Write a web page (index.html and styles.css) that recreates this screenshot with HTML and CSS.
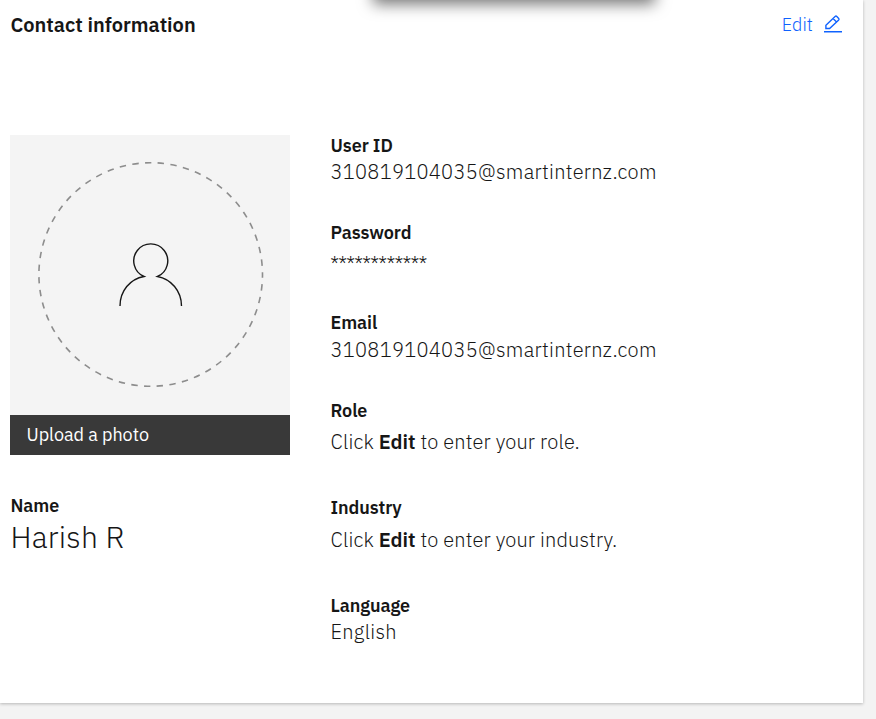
FILE: index.html
```html
<!DOCTYPE html>
<html lang="en">
<head>
<meta charset="utf-8">
<title>Contact information</title>
<link rel="stylesheet" href="styles.css">
</head>
<body>
<main class="card">
  <div class="popover-shadow"></div>
  <header class="card-header">
    <h1 class="title">Contact information</h1>
    <a class="edit"><span class="edit-text">Edit</span>
      <svg class="pencil" viewBox="0 0 20 20" fill="none" stroke="currentColor"><path d="M1 17.750H19" stroke-width="1.500"/><path stroke-width="1.400" d="M2.900 14.500V11.300L12.100 2.500Q13 1.700 13.800 2.500L15.700 4.400Q16.400 5.100 15.700 5.900L6.600 14.500ZM10 4.600L13.600 8"/></svg>
    </a>
  </header>
  <div class="columns">
    <section class="profile">
      <div class="photo">
        <svg class="avatar" viewBox="0 0 280 280" fill="none"><circle cx="140.700" cy="139.500" r="111.800" stroke="#8d8d8d" stroke-width="1.600" stroke-dasharray="6.400 6.370" stroke-dashoffset="3"/><path d="M110 171C110 156 120 144 134 141.500A17 17 0 1 1 147.500 141.500C161 144 171.500 156 171.500 171" stroke="#161616" stroke-width="1.400"/></svg>
      </div>
      <div class="upload">Upload a photo</div>
      <div class="label name-label">Name</div>
      <div class="name">Harish R</div>
    </section>
    <section class="details">
      <div class="field user-id"><div class="label">User ID</div><div class="value address">310819104035@smartinternz.com</div></div>
      <div class="field password"><div class="label">Password</div><div class="value stars">************</div></div>
      <div class="field email"><div class="label">Email</div><div class="value address">310819104035@smartinternz.com</div></div>
      <div class="field role"><div class="label">Role</div><div class="value">Click <b>Edit</b> to enter your role.</div></div>
      <div class="field industry"><div class="label">Industry</div><div class="value">Click <b>Edit</b> to enter your industry.</div></div>
      <div class="field language"><div class="label">Language</div><div class="value english">English</div></div>
    </section>
  </div>
</main>
</body>
</html>
```
FILE: styles.css
```css
* { box-sizing: border-box; }
body { margin: 0; height: 719px; overflow: hidden; background: #f3f3f3; color: #161616; font-family: "IBM Plex Sans", Roboto, sans-serif; }
.card { position: relative; width: 863px; height: 703px; background: #fff; box-shadow: 0 1px 3px rgba(0, 0, 0, .25); }
.popover-shadow { position: absolute; left: 374px; top: -20px; width: 280px; height: 20px; box-shadow: 0 3px 15px 1px rgba(0, 0, 0, .55); }
.card-header { display: flex; justify-content: space-between; height: 134px; padding: 11px 20px 0 10.5px; }
.title { margin: 0; font-size: 20px; line-height: 28px; font-weight: 600; }
.edit { display: flex; height: 28px; color: #0f62fe; font-size: 18px; line-height: 28px; font-weight: 300; letter-spacing: .1px; }
.pencil { width: 20px; height: 20px; margin: 3px 0 0 10px; }
.columns { display: flex; padding-left: 10px; }
.profile { width: 320.5px; padding-top: 1px; }
.photo { width: 280px; height: 280px; background: #f4f4f4; }
.avatar { display: block; width: 280px; height: 280px; }
.upload { width: 280px; height: 40px; padding-left: 16.5px; background: #393939; color: #fff; font-size: 18px; line-height: 40px; letter-spacing: -.03px; }
.label { font-size: 18px; line-height: 24px; font-weight: 600; letter-spacing: -.08px; }
.name-label { margin: 39px 0 0 .5px; }
.name { margin-left: .5px; font-size: 30px; line-height: 38px; font-weight: 300; letter-spacing: .25px; }
.value { font-size: 20px; line-height: 28px; font-weight: 300; letter-spacing: .15px; white-space: nowrap; }
.value b { font-weight: 600; letter-spacing: 0; }
.address { letter-spacing: .29px; }
.english { letter-spacing: .3px; }
.field { height: 87px; }
.password { height: 90px; }
.stars { padding-top: 5px; letter-spacing: -.3px; }
.email { height: 88px; }
.email .value { padding-top: 1px; }
.role { height: 97px; }
.role .value { padding-top: 5px; }
.industry { height: 98px; }
.industry .value { padding-top: 6px; }
```
